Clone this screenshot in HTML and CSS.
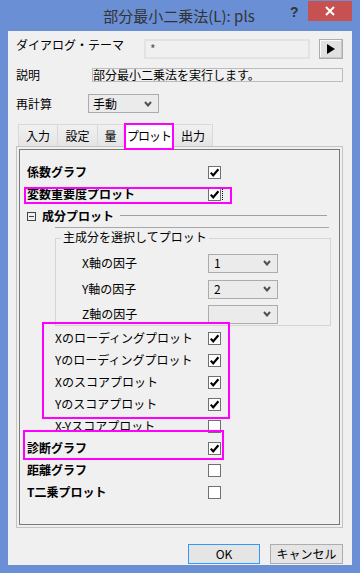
FILE: index.html
```html
<!DOCTYPE html>
<html lang="ja">
<head>
  <meta charset="UTF-8">
  <title>部分最小二乗法(L): pls</title>
  <link rel="stylesheet" href="styles.css">
</head>
<body>
  <div class="window">
    <div class="titlebar">
      <div class="title">部分最小二乗法(L): pls</div>
      <div class="help">?</div>
      <div class="close">
        <svg width="10" height="10" viewBox="0 0 10 10"><path d="M1 1 L9 9 M9 1 L1 9" stroke="#fff" stroke-width="2"/></svg>
      </div>
    </div>
    <div class="client">
      <div class="row row-theme">
        <div class="label label-theme">ダイアログ・テーマ</div>
        <div class="theme-box">*</div>
        <div class="arrow-btn">
          <svg width="8" height="10" viewBox="0 0 8 10"><path d="M0 0 L8 5 L0 10 Z" fill="#000"/></svg>
        </div>
      </div>
      <div class="row row-desc">
        <div class="label label-desc">説明</div>
        <div class="desc">部分最小二乗法を実行します。</div>
      </div>
      <div class="row row-recalc">
        <div class="label label-recalc">再計算</div>
        <div class="select select-recalc">
          <span>手動</span>
          <svg width="8" height="6" viewBox="0 0 8 6"><path d="M1 1 L4 4.5 L7 1" fill="none" stroke="#505050" stroke-width="2"/></svg>
        </div>
      </div>

      <div class="tabs">
        <div class="tab tab-w40">入力</div>
        <div class="tab tab-w40">設定</div>
        <div class="tab tab-w26">量</div>
        <div class="tab tab-active">プロット</div>
        <div class="tab tab-w39">出力</div>
      </div>

      <div class="panel">
        <div class="panel-inner">
          <div class="cb-row bold">
            <span class="cb-label">係数グラフ</span>
            <span class="cb checked"><svg width="11" height="11" viewBox="0 0 11 11"><path d="M1.8 5.6 L4.2 8.4 L9.4 2.2" fill="none" stroke="#000" stroke-width="2.2"/></svg></span>
          </div>
          <div class="cb-row bold">
            <span class="cb-label">変数重要度プロット</span>
            <span class="cb checked"><svg width="11" height="11" viewBox="0 0 11 11"><path d="M1.8 5.6 L4.2 8.4 L9.4 2.2" fill="none" stroke="#000" stroke-width="2.2"/></svg></span>
            <span class="focus-line"></span>
          </div>
          <div class="section-row">
            <span class="collapse-icon"></span>
            <span class="section-title">成分プロット</span>
            <span class="section-line"></span>
          </div>
          <div class="separator"></div>
          <div class="group">
            <div class="group-title">主成分を選択してプロット</div>
            <div class="sel-row sel-first">
              <span class="sel-label">X軸の因子</span>
              <div class="select select-factor">
                <span>1</span>
                <svg width="8" height="6" viewBox="0 0 8 6"><path d="M1 1 L4 4.5 L7 1" fill="none" stroke="#505050" stroke-width="2"/></svg>
              </div>
            </div>
            <div class="sel-row sel-second">
              <span class="sel-label">Y軸の因子</span>
              <div class="select select-factor">
                <span>2</span>
                <svg width="8" height="6" viewBox="0 0 8 6"><path d="M1 1 L4 4.5 L7 1" fill="none" stroke="#505050" stroke-width="2"/></svg>
              </div>
            </div>
            <div class="sel-row sel-third">
              <span class="sel-label">Z軸の因子</span>
              <div class="select select-factor">
                <span></span>
                <svg width="8" height="6" viewBox="0 0 8 6"><path d="M1 1 L4 4.5 L7 1" fill="none" stroke="#505050" stroke-width="2"/></svg>
              </div>
            </div>
          </div>
          <div class="cb-row indent after-group">
            <span class="cb-label">Xのローディングプロット</span>
            <span class="cb checked"><svg width="11" height="11" viewBox="0 0 11 11"><path d="M1.8 5.6 L4.2 8.4 L9.4 2.2" fill="none" stroke="#000" stroke-width="2.2"/></svg></span>
          </div>
          <div class="cb-row indent">
            <span class="cb-label">Yのローディングプロット</span>
            <span class="cb checked"><svg width="11" height="11" viewBox="0 0 11 11"><path d="M1.8 5.6 L4.2 8.4 L9.4 2.2" fill="none" stroke="#000" stroke-width="2.2"/></svg></span>
          </div>
          <div class="cb-row indent">
            <span class="cb-label">Xのスコアプロット</span>
            <span class="cb checked"><svg width="11" height="11" viewBox="0 0 11 11"><path d="M1.8 5.6 L4.2 8.4 L9.4 2.2" fill="none" stroke="#000" stroke-width="2.2"/></svg></span>
          </div>
          <div class="cb-row indent">
            <span class="cb-label">Yのスコアプロット</span>
            <span class="cb checked"><svg width="11" height="11" viewBox="0 0 11 11"><path d="M1.8 5.6 L4.2 8.4 L9.4 2.2" fill="none" stroke="#000" stroke-width="2.2"/></svg></span>
          </div>
          <div class="cb-row indent">
            <span class="cb-label">X-Yスコアプロット</span>
            <span class="cb"></span>
          </div>
          <div class="cb-row bold">
            <span class="cb-label">診断グラフ</span>
            <span class="cb checked"><svg width="11" height="11" viewBox="0 0 11 11"><path d="M1.8 5.6 L4.2 8.4 L9.4 2.2" fill="none" stroke="#000" stroke-width="2.2"/></svg></span>
          </div>
          <div class="cb-row bold">
            <span class="cb-label">距離グラフ</span>
            <span class="cb"></span>
          </div>
          <div class="cb-row bold">
            <span class="cb-label">T二乗プロット</span>
            <span class="cb"></span>
          </div>

          <!-- highlight marks drawn over the dialog -->
          <div class="mark mark-importance"></div>
          <div class="mark mark-loading"></div>
          <div class="mark mark-diag"></div>
        </div>
      </div>

      <div class="footer">
        <div class="btn btn-ok">OK</div>
        <div class="btn btn-cancel">キャンセル</div>
      </div>
    </div>
  </div>
</body>
</html>
```

FILE: styles.css
```css
* {
  box-sizing: border-box;
}
body {
  margin: 0;
  font-family: "Noto Sans CJK JP", "Noto Sans", sans-serif;
  font-size: 12px;
  color: #000;
}
.window {
  width: 360px;
  height: 573px;
  background: #6a8fd5;
  display: flex;
  flex-direction: column;
}
.titlebar {
  height: 31px;
  display: flex;
  align-items: flex-start;
  flex-shrink: 0;
}
.title {
  flex: 1;
  padding-left: 68px;
  text-align: center;
  font-size: 15px;
  line-height: 32px;
  color: #333;
}
.help {
  width: 9px;
  margin: 5px 9px 0 0;
  font-family: "Liberation Sans", sans-serif;
  font-weight: bold;
  font-size: 14px;
  line-height: 14px;
  color: #333;
}
.close {
  width: 44px;
  height: 20px;
  margin: 1px 8px 0 0;
  background: #c75050;
  display: flex;
  align-items: center;
  justify-content: center;
}
.client {
  flex: 1;
  margin: 0 8px 8px 8px;
  background: #f0f0f0;
  padding: 8px 9px 0 8px;
}
.row {
  display: flex;
}
.row-theme {
  height: 20px;
  align-items: flex-start;
}
.label {
  line-height: 12px;
  flex-shrink: 0;
}
.label-theme {
  width: 128px;
}
.theme-box {
  width: 167px;
  height: 20px;
  border: 2px solid #e3e3e3;
  color: #555;
  padding-left: 4px;
  line-height: 16px;
}
.arrow-btn {
  width: 24px;
  height: 20px;
  margin-left: 9px;
  background: #e1e1e1;
  border: 1px solid #adadad;
  box-shadow: inset -1px -1px 0 #c8c8c8, inset 1px 1px 0 #fbfbfb;
  display: flex;
  align-items: center;
  justify-content: center;
}
.row-desc {
  margin-top: 9px;
  height: 14px;
  align-items: center;
}
.label-desc {
  width: 76px;
}
.desc {
  flex: 1;
  height: 14px;
  border: 1px solid #bcbcbc;
  line-height: 12px;
  white-space: nowrap;
}
.row-recalc {
  margin-top: 12px;
  height: 19px;
  align-items: center;
}
.label-recalc {
  width: 72px;
}
.select {
  height: 19px;
  border: 1px solid #acacac;
  background: #ebebeb;
  display: flex;
  align-items: center;
  justify-content: space-between;
  padding: 0 6px 0 4px;
  line-height: 14px;
}
.select-recalc {
  width: 71px;
}
.tabs {
  display: flex;
  align-items: flex-start;
  height: 23px;
  margin: 10px 0 0 2px;
}
.tab {
  height: 22px;
  margin-top: 1px;
  border: 1px solid #d9d9d9;
  border-bottom: none;
  border-left: none;
  background: linear-gradient(#f0f0f0, #e5e5e5);
  text-align: center;
  line-height: 21px;
  white-space: nowrap;
}
.tab:first-child {
  border-left: 1px solid #d9d9d9;
}
.tab-w40 {
  width: 40px;
}
.tab-w26 {
  width: 26px;
}
.tab-w39 {
  width: 39px;
}
.tab-active {
  width: 50px;
  height: 27px;
  margin-top: 0;
  border: 2px solid #ff00ff;
  background: #fff;
  line-height: 22px;
  letter-spacing: -1px;
  position: relative;
  z-index: 2;
}
.panel {
  height: 382px;
  border: 1px solid #c4c4c4;
  padding: 2px;
}
.panel-inner {
  height: 100%;
  border: 1px solid #7a7a7a;
  padding-top: 11px;
  position: relative;
}
.cb-row {
  display: grid;
  grid-template-columns: 188px 13px auto;
  align-items: center;
  height: 22px;
}
.cb-row.bold {
  font-weight: bold;
}
.cb-row.bold .cb-label {
  padding-left: 7px;
}
.cb-row.indent .cb-label {
  padding-left: 35px;
}
.cb-label {
  white-space: nowrap;
  line-height: 14px;
}
.cb {
  width: 13px;
  height: 13px;
  border: 1px solid #707070;
  background: #fff;
  display: block;
}
.cb svg {
  display: block;
}
.focus-line {
  width: 1px;
  height: 12px;
  margin-left: 1px;
  border-left: 1px dotted #000;
}
.section-row {
  display: flex;
  align-items: center;
  height: 22px;
  padding-left: 7px;
  padding-right: 12px;
}
.collapse-icon {
  width: 9px;
  height: 9px;
  border: 1px solid #444;
  position: relative;
  flex-shrink: 0;
}
.collapse-icon::after {
  content: "";
  position: absolute;
  left: 1px;
  right: 1px;
  top: 3px;
  border-top: 1px solid #444;
}
.section-title {
  font-weight: bold;
  margin-left: 6px;
  line-height: 14px;
}
.section-line {
  flex: 1;
  margin-left: 6px;
  border-top: 1px solid #a0a0a0;
  margin-top: -2px;
}
.separator {
  margin-left: 35px;
  width: 274px;
  border-top: 1px solid #a8a8a8;
}
.group {
  margin: 10px 0 0 35px;
  width: 276px;
  border: 1px solid #d5d5d5;
  padding-bottom: 1px;
}
.group-title {
  display: table;
  margin: -9px 0 0 5px;
  padding: 0 2px;
  background: #f0f0f0;
  line-height: 14px;
}
.sel-row {
  display: grid;
  grid-template-columns: 152px 70px;
  align-items: center;
  height: 20px;
}
.sel-label {
  padding-left: 26px;
  line-height: 14px;
}
.sel-first {
  margin-top: 9px;
}
.sel-second {
  margin-top: 6px;
}
.sel-third {
  margin-top: 5px;
}
.select-factor {
  width: 70px;
  padding-left: 5px;
}
.after-group {
  margin-top: 1px;
}
.mark {
  position: absolute;
  border: 2px solid #ff00ff;
}
.mark-importance {
  left: 4px;
  top: 37px;
  width: 208px;
  height: 17px;
}
.mark-loading {
  left: 22px;
  top: 172px;
  width: 188px;
  height: 97px;
}
.mark-diag {
  left: 3px;
  top: 280px;
  width: 201px;
  height: 30px;
}
.footer {
  display: flex;
  justify-content: flex-end;
  gap: 10px;
  margin-top: 16px;
}
.btn {
  height: 20px;
  border: 1px solid #adadad;
  background: #e5e5e5;
  text-align: center;
  line-height: 17px;
}
.btn-ok {
  width: 72px;
  border-color: #3399ff;
}
.btn-cancel {
  width: 73px;
}
```
